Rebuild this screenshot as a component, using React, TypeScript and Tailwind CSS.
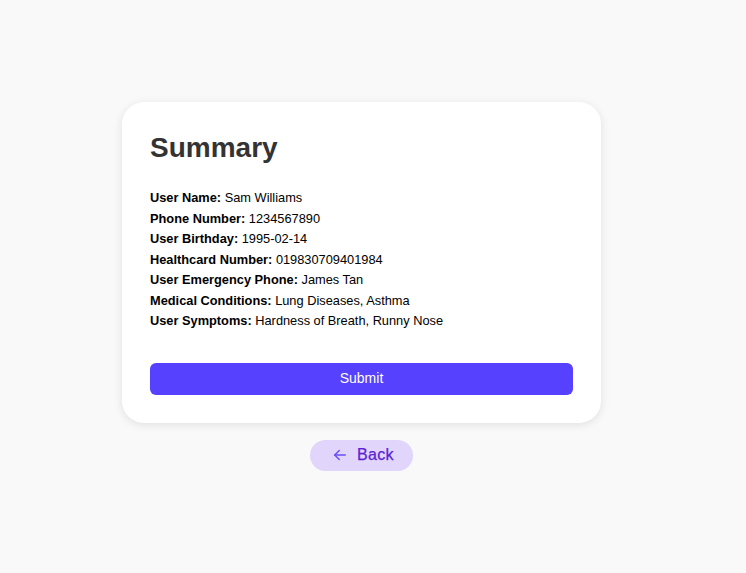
import React from "react";

const rows: [string, string][] = [
  ["User Name:", "Sam Williams"],
  ["Phone Number:", "1234567890"],
  ["User Birthday:", "1995-02-14"],
  ["Healthcard Number:", "019830709401984"],
  ["User Emergency Phone:", "James Tan"],
  ["Medical Conditions:", "Lung Diseases, Asthma"],
  ["User Symptoms:", "Hardness of Breath, Runny Nose"],
];

export default function App() {
  return (
    <div
      className="min-h-screen bg-[#f9f9f9] flex flex-col items-center justify-center pr-[23px]"
      style={{ fontFamily: '"Liberation Sans", Arial, sans-serif' }}
    >
      <div className="w-[479px] bg-white rounded-[22px] shadow-[0_2px_10px_rgba(0,0,0,0.1)] px-[28px] pt-[28px] pb-[28px]">
        <h1 className="text-[28px] font-bold text-[#333333] leading-[36px]">Summary</h1>
        <div className="mt-[22px] text-[12.8px] leading-[20.5px] text-black">
          {rows.map(([k, v]) => (
            <div key={k}>
              <span className="font-bold">{k}</span> {v}
            </div>
          ))}
        </div>
        <button className="mt-[31px] w-full h-[32px] rounded-[6px] bg-[#5541ff] text-white text-[14px]">
          Submit
        </button>
      </div>
      <button className="mt-[17px] h-[31px] w-[103px] rounded-full bg-[#e2d5fc] flex items-center justify-center gap-[8px] text-[#5b21d6] text-[16px] tracking-[0.3px] [-webkit-text-stroke:0.25px_#5b21d6]">
        <svg width="18" height="18" viewBox="0 0 24 24" fill="none" stroke="#6a4ef2" strokeWidth="2" strokeLinecap="round" strokeLinejoin="round" className="ml-[2px]">
          <path d="m11 18-6-6 6-6" />
          <path d="M19 12H5" />
        </svg>
        <span>Back</span>
      </button>
    </div>
  );
}
